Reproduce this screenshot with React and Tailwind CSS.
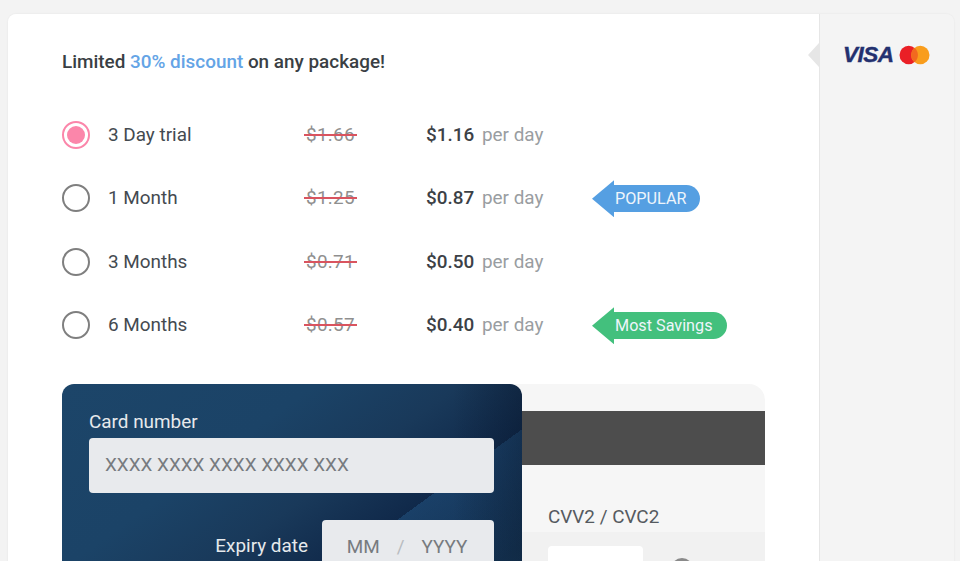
import React from "react";

const plans = [
  { name: "3 Day trial", old: "$1.66", price: "$1.16", active: true },
  { name: "1 Month", old: "$1.25", price: "$0.87", badge: "POPULAR", color: "blue" },
  { name: "3 Months", old: "$0.71", price: "$0.50" },
  { name: "6 Months", old: "$0.57", price: "$0.40", badge: "Most Savings", color: "green" },
];

const Badge = ({ text, color }) => {
  const isBlue = color === "blue";
  return (
    <div className="flex items-center mt-[1px]">
      <div
        className={`w-[22px] h-[37px] [clip-path:polygon(0_50%,100%_0,100%_100%)] ${
          isBlue ? "bg-[#559fe2]" : "bg-[#43c07d]"
        }`}
      />
      <div
        className={`h-[27px] flex items-center pl-[1px] pr-[14px] rounded-r-full text-[16.2px] leading-none text-[#eef5fb] ${
          isBlue ? "bg-[#559fe2]" : "bg-[#43c07d]"
        }`}
      >
        {text}
      </div>
    </div>
  );
};

const PlanRow = ({ name, old, price, active, badge, color }) => (
  <div className="flex items-center h-[63.5px] text-[18.9px]">
    <div className="w-[46px]">
      {active ? (
        <div className="w-[28px] h-[28px] rounded-full border-[2px] border-[#fb86aa] flex items-center justify-center">
          <div className="w-[18px] h-[18px] rounded-full bg-[#fb86aa]" />
        </div>
      ) : (
        <div className="w-[28px] h-[28px] rounded-full border-[2.5px] border-[#7f7f7f]" />
      )}
    </div>
    <div className="w-[198px] text-[#444a50]">{name}</div>
    <div className="w-[120px]">
      <span className="relative inline-block tracking-[0.3px] text-[#8f8f8f]">
        {old}
        <span className="absolute left-[-2px] right-[-2px] top-[13px] h-[2px] bg-[#d9545f]" />
      </span>
    </div>
    <div className="w-[166px] flex items-baseline">
      <span className="w-[56px] font-medium text-[#3c4146]">{price}</span>
      <span className="text-[#999da1]">per day</span>
    </div>
    {badge && <Badge text={badge} color={color} />}
  </div>
);

export default function App() {
  return (
    <div className="h-[561px] overflow-hidden bg-[#f3f3f3] pt-[14px] pl-2 pr-[6px] font-['Roboto',sans-serif]">
      <div className="flex h-[600px] rounded-t-lg overflow-hidden shadow-[0_0_2px_rgba(0,0,0,0.08)]">
        <div className="w-[811px] bg-white pl-[54px] pt-[37px]">
          <p className="text-[18.9px] leading-[22px] font-medium text-[#3a3f44]">
            Limited <span className="text-[#64a4e6]">30% discount</span> on any package!
          </p>
          <div className="mt-[30px]">
            {plans.map((p) => (
              <PlanRow key={p.name} {...p} />
            ))}
          </div>

          <div className="grid w-[703px] mt-[27px]">
            <div className="col-start-1 row-start-1 h-[300px] rounded-t-2xl bg-[#f6f6f6]">
              <div className="h-[54px] mt-[27px] bg-[#4d4d4d]" />
              <div className="pl-[486px] pt-[41px] text-[18.9px] leading-[22px] text-[#555a60]">
                CVV2 / CVC2
              </div>
              <div className="mt-[4px] h-[100px] bg-[#f1f1f1] pl-[486px] pt-[14px] flex gap-[28px]">
                <div className="w-[95px] h-[60px] rounded bg-white" />
                <div className="w-[22px] h-[22px] rounded-full bg-[#8a8a8a] mt-[12px]" />
              </div>
            </div>

            <div className="col-start-1 row-start-1 w-[460px] h-[300px] rounded-t-xl pl-[27px] pr-[28px] pt-[27px] bg-[linear-gradient(90deg,transparent_85%,rgba(8,20,38,0.35)_100%),linear-gradient(144deg,transparent_307px,rgba(38,92,140,0.45)_307px,transparent_400px),linear-gradient(144deg,#1c4569_0,#1b4367_150px,#19395a_235px,#10294a_307px,#163859_420px)]">
              <div className="text-[18.9px] leading-[22px] text-[#e6e9ec]">Card number</div>
              <div className="mt-[5px] h-[55px] rounded bg-[#e8eaed] pl-4 flex items-center text-[18.9px] text-[#777b7f]">
                XXXX XXXX XXXX XXXX XXX
              </div>
              <div className="mt-[27px] flex justify-end gap-[14px]">
                <div className="pt-[15px] text-[18.9px] leading-[22px] text-[#e6e9ec]">Expiry date</div>
                <div className="w-[172px] h-[55px] rounded bg-[#e8eaed] flex items-center justify-center gap-[17px] pr-[2px] text-[18.9px] text-[#777b7f]">
                  <span>MM</span>
                  <span className="text-[#b8bcc0]">/</span>
                  <span>YYYY</span>
                </div>
              </div>
            </div>
          </div>
        </div>

        <div className="relative flex-1 bg-[#f4f4f4] border-l border-[#e6e6e6] pl-[23px] pt-[29px]">
          <div className="absolute left-[-12px] top-[29px] w-[11px] h-[24px] bg-[#e6e6e6] [clip-path:polygon(0_50%,100%_0,100%_100%)]" />
          <div className="flex items-center gap-[5px]">
            <span className="font-['Liberation_Sans',sans-serif] text-[22.5px] leading-[24px] font-bold italic tracking-[-0.5px] text-[#23306f] [-webkit-text-stroke:0.4px_#23306f]">
              VISA
            </span>
            <svg width="31" height="20" viewBox="0 0 32 20">
              <circle cx="10" cy="10" r="9.5" fill="#ea1f26" />
              <circle cx="22" cy="10" r="9.5" fill="#f99d1c" />
              <path d="M16 2.6a9.5 9.5 0 0 1 0 14.8a9.5 9.5 0 0 1 0-14.8z" fill="#f2691f" />
            </svg>
          </div>
        </div>
      </div>
    </div>
  );
}
